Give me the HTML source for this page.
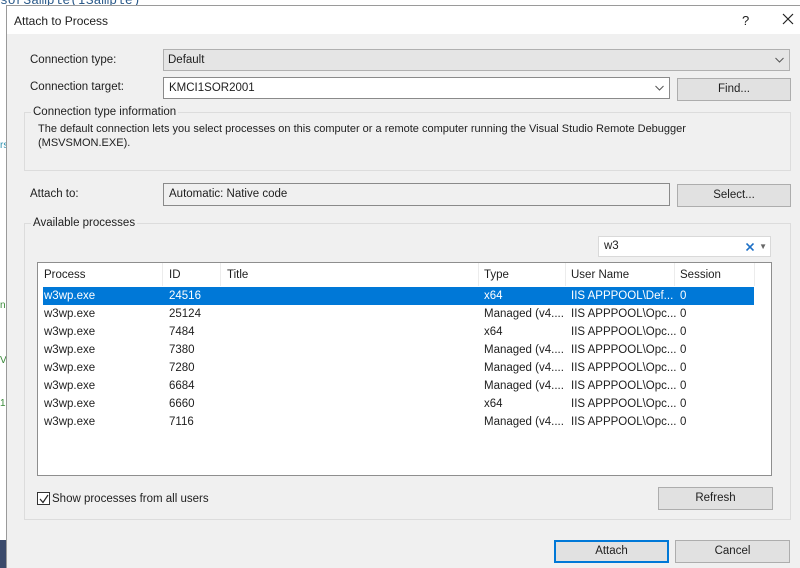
<!DOCTYPE html>
<html><head><style>
*{margin:0;padding:0;box-sizing:border-box}
body{width:800px;height:568px;overflow:hidden;background:#fff;font-family:"Liberation Sans",sans-serif;font-size:11.5px;color:#1e1e1e;position:relative}
.a{position:absolute;white-space:nowrap}
.btn{position:absolute;background:#e1e1e1;border:1px solid #adadad;text-align:center;line-height:21px}
.grp{position:absolute;border:1px solid #dcdcdc;}
.row{position:absolute;left:43px;width:711px;height:18px;line-height:18px}
.row span{position:absolute}
.chev{position:absolute;right:5px;top:7px}
</style></head><body>
<div class="a" style="left:0;top:-7px;font-family:'Liberation Mono',monospace;font-size:13px;color:#2b5a8a">sorSample(ISample)</div>
<div class="a" style="left:0;top:140px;color:#2b91af;font-size:10px">rs</div>
<div class="a" style="left:0;top:300px;color:#3a8a3a;font-size:10px">n</div>
<div class="a" style="left:0;top:355px;color:#3a8a3a;font-size:10px">Va</div>
<div class="a" style="left:0;top:398px;color:#3a8a3a;font-size:10px">1F</div>
<div class="a" style="left:0;top:540px;width:7px;height:28px;background:#3b4a6b"></div>
<div class="a" style="left:6px;top:5px;width:794px;height:563px;background:#f0f0f0;border-left:1px solid #9a9a9a;border-top:1px solid #9a9a9a"></div>
<div class="a" style="left:7px;top:6px;width:793px;height:28px;background:#fff"></div>
<div class="a" style="left:14px;top:14px;font-size:12px">Attach to Process</div>
<div class="a" style="left:742px;top:13px;font-size:13px">?</div>
<svg class="a" style="left:782px;top:13px" width="12" height="12"><path d="M1 1L11 11M11 1L1 11" stroke="#222" stroke-width="1.2"/></svg>

<div class="a" style="left:30px;top:54px">Connection type:</div>
<div class="a" style="left:163px;top:49px;width:627px;height:22px;background:#e5e5e5;border:1px solid #b0b0b0;padding-left:4px;line-height:20px">Default<svg class="chev" width="9" height="6"><path d="M0.5 1L4.5 5L8.5 1" stroke="#555" fill="none"/></svg></div>
<div class="a" style="left:30px;top:81px">Connection target:</div>
<div class="a" style="left:163px;top:77px;width:507px;height:22px;background:#fff;border:1px solid #8a8a8a;padding-left:5px;line-height:20px">KMCI1SOR2001<svg class="chev" width="9" height="6"><path d="M0.5 1L4.5 5L8.5 1" stroke="#555" fill="none"/></svg></div>
<div class="btn" style="left:677px;top:78px;width:114px;height:23px">Find...</div>

<div class="grp" style="left:24px;top:112px;width:767px;height:59px"></div>
<div class="a" style="left:31px;top:106px;background:#f0f0f0;padding:0 2px">Connection type information</div>
<div class="a" style="left:38px;top:123px;font-size:11px">The default connection lets you select processes on this computer or a remote computer running the Visual Studio Remote Debugger</div>
<div class="a" style="left:38px;top:137px;font-size:11px">(MSVSMON.EXE).</div>

<div class="a" style="left:30px;top:188px">Attach to:</div>
<div class="a" style="left:163px;top:183px;width:507px;height:23px;background:#f0f0f0;border:1px solid #8a8a8a;padding-left:5px;line-height:21px">Automatic: Native code</div>
<div class="btn" style="left:677px;top:184px;width:114px;height:23px">Select...</div>

<div class="grp" style="left:24px;top:223px;width:767px;height:297px"></div>
<div class="a" style="left:31px;top:217px;background:#f0f0f0;padding:0 2px">Available processes</div>
<div class="a" style="left:598px;top:236px;width:173px;height:21px;background:#fff;border:1px solid #d9d9d9;padding-left:5px;line-height:19px">w3<svg style="position:absolute;right:16px;top:6px" width="8" height="8"><path d="M0.5 0.5L7.5 7.5M7.5 0.5L0.5 7.5" stroke="#1c6fc6" stroke-width="1.6"/></svg><span style="position:absolute;right:3px;color:#666;font-size:8px">▼</span></div>

<div class="a" style="left:37px;top:262px;width:735px;height:214px;background:#fff;border:1px solid #8e8e8e"></div>
<div class="a" style="left:162px;top:263px;width:1px;height:23px;background:#ececec"></div>
<div class="a" style="left:220px;top:263px;width:1px;height:23px;background:#ececec"></div>
<div class="a" style="left:478px;top:263px;width:1px;height:23px;background:#ececec"></div>
<div class="a" style="left:565px;top:263px;width:1px;height:23px;background:#ececec"></div>
<div class="a" style="left:674px;top:263px;width:1px;height:23px;background:#ececec"></div>
<div class="a" style="left:754px;top:263px;width:1px;height:23px;background:#ececec"></div>
<div class="a" style="left:44px;top:269px">Process</div>
<div class="a" style="left:169px;top:269px">ID</div>
<div class="a" style="left:227px;top:269px">Title</div>
<div class="a" style="left:484px;top:269px">Type</div>
<div class="a" style="left:571px;top:269px">User Name</div>
<div class="a" style="left:680px;top:269px">Session</div>

<div class="row" style="top:287px;background:#0078d7;color:#fff"><span style="left:1px">w3wp.exe</span><span style="left:126px">24516</span><span style="left:441px">x64</span><span style="left:528px">IIS APPPOOL\Def...</span><span style="left:637px">0</span></div>
<div class="row" style="top:305px"><span style="left:1px">w3wp.exe</span><span style="left:126px">25124</span><span style="left:441px">Managed (v4....</span><span style="left:528px">IIS APPPOOL\Opc...</span><span style="left:637px">0</span></div>
<div class="row" style="top:323px"><span style="left:1px">w3wp.exe</span><span style="left:126px">7484</span><span style="left:441px">x64</span><span style="left:528px">IIS APPPOOL\Opc...</span><span style="left:637px">0</span></div>
<div class="row" style="top:341px"><span style="left:1px">w3wp.exe</span><span style="left:126px">7380</span><span style="left:441px">Managed (v4....</span><span style="left:528px">IIS APPPOOL\Opc...</span><span style="left:637px">0</span></div>
<div class="row" style="top:359px"><span style="left:1px">w3wp.exe</span><span style="left:126px">7280</span><span style="left:441px">Managed (v4....</span><span style="left:528px">IIS APPPOOL\Opc...</span><span style="left:637px">0</span></div>
<div class="row" style="top:377px"><span style="left:1px">w3wp.exe</span><span style="left:126px">6684</span><span style="left:441px">Managed (v4....</span><span style="left:528px">IIS APPPOOL\Opc...</span><span style="left:637px">0</span></div>
<div class="row" style="top:395px"><span style="left:1px">w3wp.exe</span><span style="left:126px">6660</span><span style="left:441px">x64</span><span style="left:528px">IIS APPPOOL\Opc...</span><span style="left:637px">0</span></div>
<div class="row" style="top:413px"><span style="left:1px">w3wp.exe</span><span style="left:126px">7116</span><span style="left:441px">Managed (v4....</span><span style="left:528px">IIS APPPOOL\Opc...</span><span style="left:637px">0</span></div>

<div class="a" style="left:37px;top:492px;width:13px;height:13px;border:1px solid #333;background:#fff"><svg style="position:absolute;left:1px;top:1px" width="10" height="10"><path d="M1 5L4 8.5L9 1" stroke="#222" stroke-width="1.2" fill="none"/></svg></div>
<div class="a" style="left:52px;top:493px">Show processes from all users</div>
<div class="btn" style="left:658px;top:487px;width:115px;height:23px">Refresh</div>

<div class="btn" style="left:554px;top:540px;width:115px;height:23px;border:1px solid #0078d7;box-shadow:inset 0 0 0 1px #0078d7">Attach</div>
<div class="btn" style="left:675px;top:540px;width:115px;height:23px">Cancel</div>
</body></html>
